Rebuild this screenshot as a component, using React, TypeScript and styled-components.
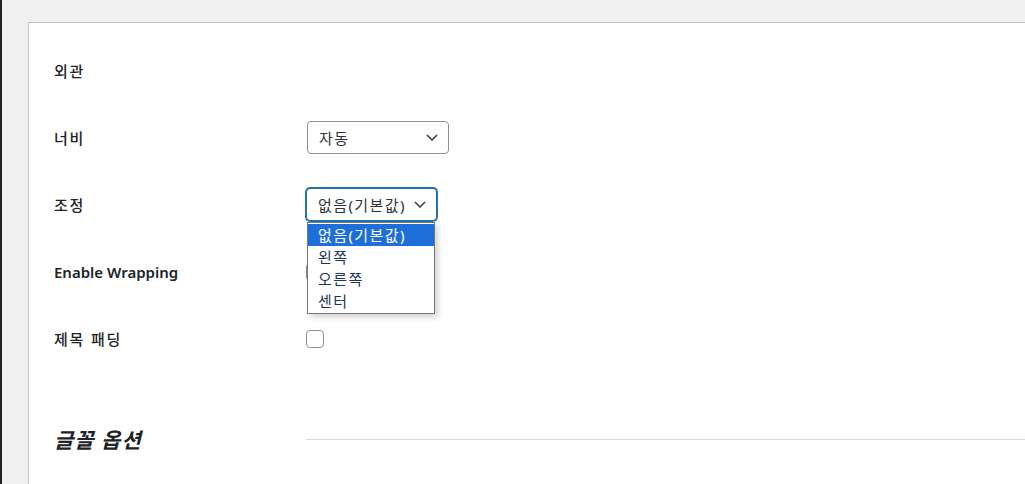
import React from "react";
import styled, { createGlobalStyle } from "styled-components";

const Global = createGlobalStyle`
  html, body { margin: 0; padding: 0; }
  body {
    background: #f0f0f1;
    font-family: "Noto Sans", "Noto Sans CJK KR", sans-serif;
    color: #1d2327;
    overflow: hidden;
  }
`;

const Page = styled.div`
  display: flex;
  height: 484px;
  width: 1025px;
  overflow: hidden;
`;

const SideEdge = styled.div`
  width: 2px;
  flex: none;
  background: #1d2327;
`;

const Main = styled.div`
  flex: 1;
  padding: 22px 0 0 26px;
  min-width: 0;
`;

const Card = styled.div`
  background: #fff;
  border: 1px solid #c3c4c7;
  margin-right: -40px;
  height: 560px;
  padding: 14px 0 0 25px;
`;

const Row = styled.div`
  display: grid;
  grid-template-columns: 252px 1fr;
  align-items: center;
  height: 67px;
`;

const Label = styled.div<{ $ko?: boolean }>`
  font-size: 15px;
  font-weight: ${(p) => (p.$ko ? 500 : 600)};
  letter-spacing: ${(p) => (p.$ko ? "1.8px" : "0")};
  line-height: 20px;
`;

const Field = styled.div`
  position: relative;
  display: flex;
  align-items: center;
`;

const SelectBox = styled.div<{ $width: number; $focused?: boolean }>`
  box-sizing: border-box;
  width: ${(p) => p.$width}px;
  height: 33px;
  border: 1px solid ${(p) => (p.$focused ? "#2271b1" : "#8c8f94")};
  box-shadow: ${(p) => (p.$focused ? "0 0 0 1px #2271b1" : "none")};
  border-radius: 4px;
  display: flex;
  align-items: center;
  justify-content: space-between;
  padding: 0 10px 0 11px;
  font-size: 15px;
  letter-spacing: 1.4px;
  color: #2c3338;
  background: #fff;
  margin-left: ${(p) => (p.$focused ? 0 : 1)}px;
`;

const Chevron = () => (
  <svg width="12" height="7" viewBox="0 0 12 7" fill="none">
    <polyline points="1,1 6,6 11,1" stroke="#3c434a" strokeWidth="1.6" />
  </svg>
);

const Dropdown = styled.ul`
  position: absolute;
  top: calc(100% + 1px);
  left: 1px;
  width: 128px;
  box-sizing: border-box;
  margin: 0;
  padding: 1px 0;
  list-style: none;
  background: #fff;
  border: 1px solid #767676;
  box-shadow: 3px 3px 6px rgba(0, 0, 0, 0.18);
  z-index: 5;
`;

const Option = styled.li<{ $selected?: boolean }>`
  height: 22px;
  line-height: 22px;
  padding-left: 10px;
  font-size: 15px;
  letter-spacing: 1.4px;
  background: ${(p) => (p.$selected ? "#1e6fd9" : "transparent")};
  color: ${(p) => (p.$selected ? "#fff" : "#1f3556")};
`;

const Checkbox = styled.span`
  display: inline-block;
  box-sizing: border-box;
  width: 18px;
  height: 18px;
  border: 1px solid #8c8f94;
  border-radius: 4px;
  background: #fff;
`;

const HeadingRow = styled.div`
  display: grid;
  grid-template-columns: 252px 1fr;
  align-items: center;
  height: 40px;
  margin-top: 48px;
`;

const Heading = styled.h2`
  margin: 0;
  font-size: 21px;
  font-weight: 700;
  font-style: italic;
  letter-spacing: 1px;
  line-height: 28px;
`;

const Rule = styled.hr`
  margin: 0;
  border: none;
  border-top: 1px solid #dcdcde;
  height: 0;
  position: relative;
  top: -1px;
`;

export default function App() {
  return (
    <>
      <Global />
      <Page>
        <SideEdge />
        <Main>
          <Card>
            <Row>
              <Label $ko>외관</Label>
              <div />
            </Row>
            <Row>
              <Label $ko>너비</Label>
              <Field>
                <SelectBox $width={142}>
                  <span>자동</span>
                  <Chevron />
                </SelectBox>
              </Field>
            </Row>
            <Row>
              <Label $ko>조정</Label>
              <Field>
                <SelectBox $width={131} $focused>
                  <span>없음(기본값)</span>
                  <Chevron />
                </SelectBox>
                <Dropdown>
                  <Option $selected>없음(기본값)</Option>
                  <Option>왼쪽</Option>
                  <Option>오른쪽</Option>
                  <Option>센터</Option>
                </Dropdown>
              </Field>
            </Row>
            <Row>
              <Label>Enable Wrapping</Label>
              <Field>
                <Checkbox />
              </Field>
            </Row>
            <Row>
              <Label $ko>제목 패딩</Label>
              <Field>
                <Checkbox />
              </Field>
            </Row>
            <HeadingRow>
              <Heading>글꼴 옵션</Heading>
              <Rule />
            </HeadingRow>
          </Card>
        </Main>
      </Page>
    </>
  );
}
